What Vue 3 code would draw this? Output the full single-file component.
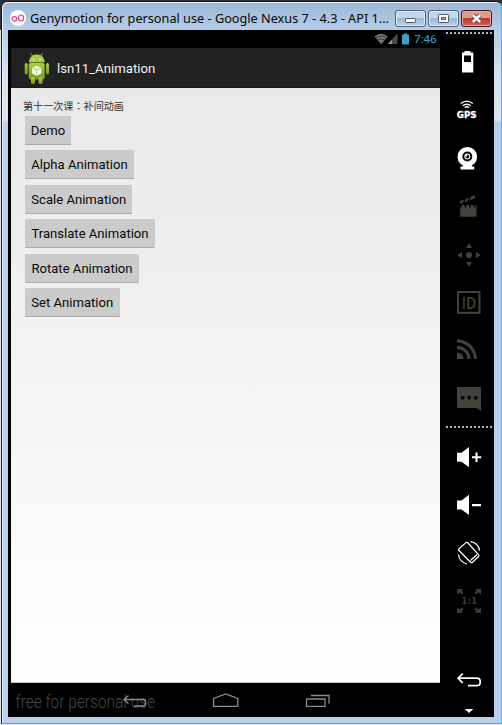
<script setup>
const buttons = [
  { label: 'Demo', width: 46 },
  { label: 'Alpha Animation', width: 109 },
  { label: 'Scale Animation', width: 107.4 },
  { label: 'Translate Animation', width: 130 },
  { label: 'Rotate Animation', width: 114 },
  { label: 'Set Animation', width: 94.5 },
]
</script>

<template>
  <div class="desktop">
    <div class="window">
      <header class="titlebar">
        <svg class="logo" width="16" height="16" viewBox="0 0 16 16">
          <circle cx="8" cy="8" r="8" fill="#fff" />
          <g fill="none" stroke="#e23a78" stroke-width="1.2">
            <circle cx="4.4" cy="8.8" r="2.3" />
            <ellipse cx="11" cy="8" rx="2.6" ry="3" />
          </g>
        </svg>
        <svg class="title" width="362" height="24" viewBox="0 0 362 24">
          <text x="0" y="17" textLength="359" lengthAdjust="spacingAndGlyphs">Genymotion for personal use - Google Nexus 7 - 4.3 - API 1...</text>
        </svg>
        <div class="controls">
          <button class="ctl">
            <svg width="29" height="15" viewBox="0 0 29 15"><rect x="9.5" y="7.5" width="10" height="4" rx=".7" fill="#fff" stroke="#515966" /></svg>
          </button>
          <button class="ctl">
            <svg width="29" height="15" viewBox="0 0 29 15"><rect x="9.5" y="3.5" width="10" height="8" rx=".7" fill="#fff" stroke="#515966" /><rect x="12.5" y="6.5" width="4" height="2" fill="#a8bdd5" stroke="#515966" /></svg>
          </button>
          <button class="ctl close">
            <svg width="29" height="15" viewBox="0 0 29 15"><path d="M11 4L18 11M18 4L11 11" stroke="#594353" stroke-width="4.4" /><path d="M10.8 4L18.2 11M18.2 4L10.8 11" stroke="#fff" stroke-width="2.5" /></svg>
          </button>
        </div>
      </header>

      <div class="client">
        <main class="phone">
          <div class="status">
            <svg width="36" height="13" viewBox="374 33 36 13">
              <path d="M374.5 36.4Q381 31.3 387.8 36.4L381.2 44.3Z" fill="#777" />
              <path d="M375.8 38Q381.2 34 386.6 38M377.6 40Q381.2 37.6 384.8 40" fill="none" stroke="#222" stroke-width=".8" />
              <path d="M388 44L397.5 33.5V44Z" fill="#4b4b4b" />
              <path d="M388 44L392 39.6V44Z" fill="#999" />
              <path d="M404 33.500h3v1h2V44.500h-7v-10h2Z" fill="#3d9fc8" />
            </svg>
            <span class="clock">7:46</span>
          </div>

          <div class="actionbar">
            <svg width="26" height="32" viewBox="24 51 26 32">
              <defs>
                <linearGradient id="droid" x1="0" y1="0" x2="0" y2="1">
                  <stop offset="0" stop-color="#a9ce42" />
                  <stop offset="1" stop-color="#78991c" />
                </linearGradient>
              </defs>
              <path d="M32.500 55L31.200 52.500M41 55L42.300 52.500" stroke="#91b533" stroke-width="1" />
              <path d="M29 61.500C29 56 32.500 53.500 36.800 53.500S44.600 56 44.600 61.500Z" fill="#a6ca45" />
              <g fill="url(#droid)">
                <rect x="28.700" y="62" width="16" height="16.500" rx="2" />
                <rect x="24.700" y="62" width="3" height="11.500" rx="1.500" />
                <rect x="46" y="62" width="3" height="11.500" rx="1.500" />
                <rect x="31" y="76" width="4" height="7" rx="1.800" />
                <rect x="38.500" y="76" width="4" height="7" rx="1.800" />
              </g>
              <circle cx="33.500" cy="58.500" r=".8" fill="#fff" /><circle cx="40" cy="58.500" r=".8" fill="#fff" />
              <path d="M36.700 64.800L41.300 66.800V72.300L36.700 75L32.100 72.300V66.800Z" fill="#f8fbef" />
              <path d="M32.300 67L36.700 69L41.100 67M36.700 69V75" fill="none" stroke="#9dbf52" stroke-width=".8" />
            </svg>
            <h1>lsn11_Animation</h1>
          </div>

          <section class="content">
            <p>第十一次课<span class="colon" lang="zh-TW">：</span>补间动画</p>
            <div class="list">
              <button v-for="b in buttons" :key="b.label" :style="{ width: b.width + 'px' }">{{ b.label }}</button>
            </div>
          </section>

          <nav class="navbar">
            <svg width="429" height="34" viewBox="11 683 429 34">
              <text class="mark" x="15.500" y="708" textLength="139.500" lengthAdjust="spacingAndGlyphs">free for personal use</text>
              <g fill="none" stroke="#8b8b8b" stroke-width="1.300">
                <path d="M128.500 695.500L123.800 699.500L128.500 703.500M124 699.500H143C146.500 699.500 146.500 706 143 706H134" />
                <path d="M213.600 706.300V698.500L225.700 694L237.800 698.500V706.300Z" />
                <path d="M306.500 699H325V706.300H306.500ZM311 695.500H329V703.500" />
              </g>
            </svg>
          </nav>
        </main>

        <aside class="tools">
          <div class="dots"></div>
          <div class="group first">
            <svg viewBox="457 50 24 24"><path fill="#fff" fill-rule="evenodd" d="M464.500 51h6v1.500h2.800V72.500H462V52.500h2.500ZM464 55.500v6.500h7v-6.500Z" /></svg>
            <svg viewBox="457 98 24 24">
              <g fill="none" stroke="#fff" stroke-width="1.400"><path d="M460.800 103.500Q466.800 98.800 472.800 103.500M462.800 105.700Q466.800 102.700 470.800 105.700" /><path d="M464.600 107.500Q466.800 106 469 107.500" /></g>
              <text class="gps" x="456.800" y="118" textLength="19.800" lengthAdjust="spacingAndGlyphs">GPS</text>
            </svg>
            <svg viewBox="457 146 24 24">
              <circle cx="467.300" cy="156.800" r="9.800" fill="#fff" /><circle cx="467.300" cy="156.500" r="4" fill="none" stroke="#000" stroke-width="2" /><circle cx="467.300" cy="156.500" r="1.900" fill="#000" /><circle cx="466.200" cy="155.700" r="1.100" fill="#fff" />
              <path d="M463 165h9v1.500h2.200v3H460.500v-3h2.500Z" fill="#fff" />
            </svg>
            <svg viewBox="457 194 24 24" fill="#43433e">
              <path d="M460.200 205H476.500V216.700H460.200Z" />
              <path d="M459.700 201.300L474.500 195.200L475.200 198L460.500 204Z" />
              <path d="M460.200 206.200H476.500" stroke="#000" stroke-width="2.600" stroke-dasharray="1.500 3" />
              <path d="M463 203.500L466 197.500M468 201.500L470.500 196" stroke="#000" stroke-width="1.200" />
            </svg>
            <svg viewBox="457 242 24 24" fill="#43433e"><circle cx="469" cy="255" r="3" /><path d="M466 248L469 243.300L472 248ZM466 262L469 266.500L472 262ZM462 252L457.300 255L462 258ZM476 252L480.700 255L476 258Z" /></svg>
            <svg viewBox="457 290 24 24">
              <rect x="458" y="292" width="21.500" height="20.800" fill="none" stroke="#43433e" stroke-width="2" />
              <text class="id" x="461.700" y="308.500" textLength="14.300" lengthAdjust="spacingAndGlyphs">ID</text>
            </svg>
            <svg viewBox="457 338 24 24" fill="none" stroke="#43433e" stroke-width="3.200"><path d="M457 340.800A18.500 18.500 0 0 1 475.300 359M457 347.300A12 12 0 0 1 469 359" /><path d="M457 352.500A6.500 6.500 0 0 1 463.500 359H457Z" fill="#43433e" stroke="none" /></svg>
            <svg viewBox="457 386 24 24"><path d="M457 387H481V411L476.500 408H457Z" fill="#43433e" /><g fill="#000"><circle cx="462.700" cy="397.700" r="1.900" /><circle cx="469.200" cy="397.700" r="1.900" /><circle cx="475.700" cy="397.700" r="1.900" /></g></svg>
          </div>
          <div class="dots"></div>
          <div class="group second">
            <svg viewBox="457 445 24 24" fill="#fff"><path d="M457 452.800H461.500L469 447V467.300L461.500 461.800H457ZM472 456.300h3.500v-3.800h2v3.800h3.700v2h-3.700v3.800h-2v-3.800H472Z" /></svg>
            <svg viewBox="457 493 24 24" fill="#fff"><path d="M457 500.500H461.500L469 494.700V515L461.500 509.500H457ZM472 504h9v2.200h-9Z" /></svg>
            <svg viewBox="457 541 24 24" fill="none" stroke="#fff" stroke-width="1.200">
              <path d="M459 548.800L466 542.600Q467 541.900 468 543L478.500 554.700Q479.300 555.700 478.500 556.500L472.500 562.300Q471.400 563.200 470.300 562L459 550.500Q458.100 549.600 459 548.800Z" />
              <path d="M470.500 560.500L477 554.500" stroke-width="1.300" />
              <path d="M470.500 541.700Q477.800 542.500 479.700 550.500M458.300 554.500Q459.500 562 467 564" />
            </svg>
            <svg viewBox="457 589 24 24" fill="#3c3c38">
              <path d="M457 589h6l-1.500 1.700l2 2l-1.900 1.900l-2-2l-2.600 2.200ZM481 589H475l1.500 1.700l-2 2l1.900 1.900l2-2l2.600 2.200ZM457 613h6l-1.500-1.700l2-2l-1.900-1.900l-2 2l-2.600-2.200ZM481 613H475l1.500-1.700l-2-2l1.900-1.900l2 2l2.600-2.200Z" />
              <text class="ratio" x="461.500" y="604.200" textLength="15.500">1:1</text>
            </svg>
          </div>
          <svg class="back" width="24" height="16" viewBox="457 672 24 16" fill="none" stroke="#fff" stroke-width="1.700"><path d="M462.800 673.500L458 678.200L462.800 683M458 678.200H476.500C481.500 678.200 481.500 685.600 476.500 685.600H468" /></svg>
          <svg class="more" width="10" height="6" viewBox="0 0 10 6"><path d="M.7 1h8.600L5 5Z" fill="#fff" /></svg>
        </aside>
      </div>
    </div>
  </div>
</template>

<style>
body { margin: 0; overflow: hidden; }
</style>

<style scoped>
* { box-sizing: border-box; }
svg { display: block; flex: none; }
.desktop { width: 502px; height: 725px; padding: 1px 0 1px 1px; background: linear-gradient(#33303a 0 30px, #e6e8ec 30px); }
.window {
  width: 501px; height: 723px; padding: 0 6px 5px; overflow: hidden;
  border: 1px solid #17191f; border-right-color: #1bcdf0; border-bottom-color: #22b6d5;
  border-radius: 6px 6px 0 0;
  background: linear-gradient(#9db7d6 0, #b5cde8 28px, #d4e1f1 70px, #dee7f3 118px, #b9d1ed 120px);
  box-shadow: inset 1px 1px #e7f3fc;
}
.titlebar { height: 28px; display: flex; align-items: flex-start; padding-left: 2px; }
.logo { margin-top: 8px; }
.title { margin: 4px 0 0 4px; overflow: visible; }
.title text { font: 12.500px "Noto Sans", sans-serif; fill: #080808; }
.controls { display: flex; gap: 2px; padding-top: 8px; margin-left: 3px; }
.ctl { width: 31px; height: 17px; padding: 0; border: 1px solid #53657c; border-radius: 3px; background: linear-gradient(#c4d6eb 0 48%, #a1b8d3 50%, #bbd0e7); box-shadow: inset 0 0 0 1px #e0eaf5; }
.close { border-color: #4b1720; background: linear-gradient(#df9b8c 0 45%, #bd392b 50%, #cb6651); box-shadow: inset 0 0 0 1px #e7aa9b; }
.client { width: 486px; height: 687px; display: flex; background: #000; padding-left: 3px; }
.phone { width: 429px; display: flex; flex-direction: column; font-family: Roboto, sans-serif; }
.status { height: 18px; display: flex; align-items: center; justify-content: flex-end; padding-right: 4px; gap: 4px; }
.clock { color: #35a7d1; font-size: 11.800px; line-height: 18px; width: 22px; white-space: nowrap; }
.actionbar { height: 40px; display: flex; align-items: center; gap: 7px; padding-left: 13px; background: #222; border-bottom: 1px solid #191919; }
h1 { margin: 0; font-size: 13.200px; font-weight: 400; color: #f1f1f1; line-height: 20px; padding-top: 2px; }
.content { height: 595px; padding: 11px 12px 0; background: linear-gradient(#e8e8e8, #fff); border-bottom: 1px solid #ccc; }
p { margin: 0; height: 14px; font: 10.100px/14px "Noto Sans CJK SC", sans-serif; color: #333; white-space: nowrap; }
.colon { font-family: "Noto Sans CJK TC", sans-serif; }
.list { display: flex; flex-direction: column; align-items: flex-start; gap: 5.400px; padding: 3px 0 0 2px; }
.list button { height: 29px; padding: 1px 0 0; border: 0; border-bottom: 1px solid #aaa; border-radius: 1px; background: #cbcbcb; color: #080808; font: 13.100px Roboto, sans-serif; white-space: nowrap; }
.navbar { height: 34px; }
.mark { font: 300 18px Roboto, sans-serif; fill: #474747; }
.tools { width: 54px; padding: 2px 0 0 6px; display: flex; flex-direction: column; }
.dots { height: 2px; width: 46px; background: repeating-linear-gradient(90deg, #b5b5b5 0 2px, transparent 2px 4px); }
.group { display: flex; flex-direction: column; gap: 24px; padding-left: 11px; }
.group svg { width: 24px; height: 24px; overflow: visible; }
.first { padding-top: 16px; height: 392px; }
.second { padding-top: 17px; height: 244px; }
.gps { font: 700 9.500px "DejaVu Sans", sans-serif; fill: #fff; stroke: #fff; stroke-width: .3; }
.id { font: 600 15.500px "Open Sans", sans-serif; fill: #43433e; }
.ratio { font: 700 8px "DejaVu Sans", sans-serif; fill: #3c3c38; }
.back { margin-left: 11px; }
.more { margin: 20px 0 0 18px; }
</style>
